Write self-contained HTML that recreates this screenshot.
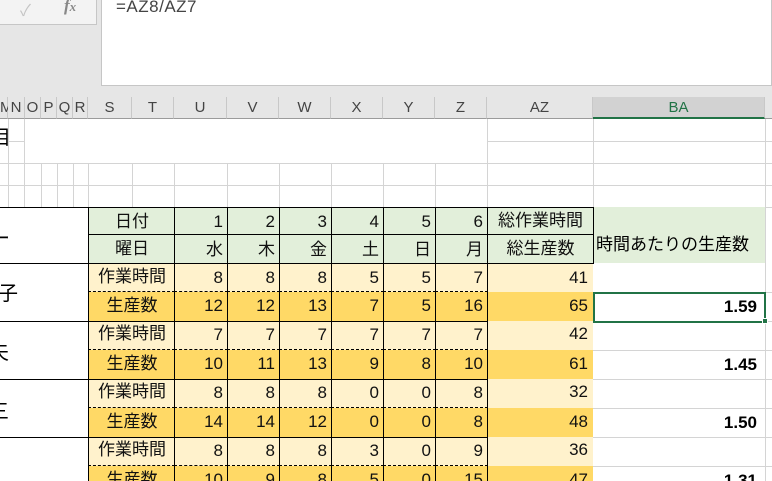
<!DOCTYPE html>
<html><head><meta charset="utf-8"><style>
html,body{margin:0;width:772px;height:481px;overflow:hidden;}
body{background:#fff;position:relative;font-family:"Liberation Sans","Noto Sans CJK JP",sans-serif;}
div{position:absolute;box-sizing:border-box;}
.h{top:97px;height:22px;background:#e6e6e6;border-right:1px solid #c8c8c8;border-bottom:1px solid #9b9b9b;color:#444;font-size:15px;text-align:center;line-height:22px;}
.c{font-size:17px;text-align:right;padding-right:5px;color:#111;border-left:1px solid #000;}
.g{background:#e2efda;}
.y{background:#fff2cc;}
.o{background:#ffd966;}
.l{text-align:center;padding:0;}
.vl{width:1px;background:#d4d4d4;}
.hl{height:1px;background:#d4d4d4;}
</style></head><body>
<div style="left:0;top:0;width:772px;height:97px;background:#e6e6e6;"></div>
<div style="left:0;top:0;width:97px;height:25px;background:#f3f3f3;border-right:1px solid #c6c6c6;border-bottom:1px solid #c6c6c6;"></div>
<div style="left:20px;top:-3px;font-size:16px;color:#c4c4c4;">✓</div>
<div style="left:64px;top:-4px;font-size:17px;color:#888;font-style:italic;font-family:'Liberation Serif',serif;font-weight:bold;">f<span style="font-size:13px">x</span></div>
<div style="left:101px;top:-1px;width:671px;height:87px;background:#fff;border:1px solid #c6c6c6;"></div>
<div style="left:116px;top:-3px;font-size:17px;color:#444;letter-spacing:0.5px;">=AZ8/AZ7</div>
<div class="h" style="left:0;width:8px;">M</div>
<div class="h" style="left:8px;width:17px;">N</div>
<div class="h" style="left:25px;width:16px;">O</div>
<div class="h" style="left:41px;width:16px;">P</div>
<div class="h" style="left:57px;width:16px;">Q</div>
<div class="h" style="left:73px;width:15px;">R</div>
<div class="h" style="left:88px;width:44px;">S</div>
<div class="h" style="left:132px;width:42px;">T</div>
<div class="h" style="left:174px;width:53px;">U</div>
<div class="h" style="left:227px;width:52px;">V</div>
<div class="h" style="left:279px;width:52px;">W</div>
<div class="h" style="left:331px;width:52px;">X</div>
<div class="h" style="left:383px;width:52px;">Y</div>
<div class="h" style="left:435px;width:52px;">Z</div>
<div class="h" style="left:487px;width:106px;">AZ</div>
<div class="h" style="left:593px;width:172px;background:#d2d2d2;color:#217346;border-bottom:2px solid #217346;">BA</div>
<div class="h" style="left:765px;width:10px;"></div>
<div class="vl" style="left:8px;top:119px;height:88px;"></div>
<div class="vl" style="left:24px;top:119px;height:88px;"></div>
<div class="vl" style="left:41px;top:163px;height:44px;"></div>
<div class="vl" style="left:57px;top:163px;height:44px;"></div>
<div class="vl" style="left:73px;top:163px;height:44px;"></div>
<div class="vl" style="left:88px;top:163px;height:44px;"></div>
<div class="vl" style="left:132px;top:163px;height:44px;"></div>
<div class="vl" style="left:174px;top:163px;height:44px;"></div>
<div class="vl" style="left:227px;top:163px;height:44px;"></div>
<div class="vl" style="left:279px;top:163px;height:44px;"></div>
<div class="vl" style="left:331px;top:163px;height:44px;"></div>
<div class="vl" style="left:383px;top:163px;height:44px;"></div>
<div class="vl" style="left:435px;top:163px;height:44px;"></div>
<div class="vl" style="left:487px;top:119px;height:88px;"></div>
<div class="vl" style="left:593px;top:119px;height:88px;"></div>
<div class="vl" style="left:765px;top:119px;height:362px;"></div>
<div class="hl" style="left:8px;top:141px;width:16px;"></div>
<div class="hl" style="left:487px;top:141px;width:290px;"></div>
<div class="hl" style="left:0;top:163px;width:772px;"></div>
<div class="hl" style="left:0;top:185px;width:772px;"></div>
<div class="hl" style="left:593px;top:207px;width:180px;"></div>
<div style="left:-9px;top:121px;font-size:20px;">目</div>
<div style="left:0;top:207px;width:88px;height:1px;background:#000;"></div>
<div style="left:0;top:263px;width:88px;height:1px;background:#000;"></div>
<div style="left:0;top:321px;width:88px;height:1px;background:#000;"></div>
<div style="left:0;top:379px;width:88px;height:1px;background:#000;"></div>
<div style="left:0;top:437px;width:88px;height:1px;background:#000;"></div>
<div style="left:-10px;top:222px;font-size:20px;">ー</div>
<div style="left:-2px;top:277px;font-size:20px;">子</div>
<div style="left:-11px;top:336px;font-size:20px;">夫</div>
<div style="left:-11px;top:395px;font-size:20px;">三</div>
<div class="g" style="left:593px;top:207px;width:172px;height:56px;font-size:17px;line-height:76px;padding-left:3px;">時間あたりの生産数</div>
<div style="left:593px;top:263px;width:180px;height:218px;background:#fff;"></div>
<div class="hl" style="left:593px;top:292px;width:180px;"></div>
<div class="hl" style="left:593px;top:321px;width:180px;"></div>
<div class="hl" style="left:593px;top:350px;width:180px;"></div>
<div class="hl" style="left:593px;top:379px;width:180px;"></div>
<div class="hl" style="left:593px;top:408px;width:180px;"></div>
<div class="hl" style="left:593px;top:437px;width:180px;"></div>
<div class="hl" style="left:593px;top:466px;width:180px;"></div>
<div class="vl" style="left:765px;top:263px;height:218px;"></div>
<div style="left:593px;top:292px;width:173px;height:31px;border:2px solid #217346;"></div>
<div style="left:762px;top:318px;width:6px;height:6px;background:#217346;border:1px solid #fff;"></div>
<div style="left:593px;top:292px;width:170px;height:30px;text-align:right;font-weight:bold;font-size:17px;line-height:30px;padding-right:6px;">1.59</div>
<div style="left:593px;top:350px;width:170px;height:30px;text-align:right;font-weight:bold;font-size:17px;line-height:30px;padding-right:6px;">1.45</div>
<div style="left:593px;top:408px;width:170px;height:30px;text-align:right;font-weight:bold;font-size:17px;line-height:30px;padding-right:6px;">1.50</div>
<div style="left:593px;top:466px;width:170px;height:15px;text-align:right;font-weight:bold;font-size:17px;line-height:30px;padding-right:6px;overflow:hidden;">1.31</div>

<div class="c g l" style="left:88px;top:207px;width:87px;height:28px;line-height:28px;border-top:1px solid #000;border-bottom:1px solid #000;">日付</div>
<div class="c g" style="left:174px;top:207px;width:54px;height:28px;line-height:28px;border-top:1px solid #000;border-bottom:1px solid #000;">1</div>
<div class="c g" style="left:227px;top:207px;width:53px;height:28px;line-height:28px;border-top:1px solid #000;border-bottom:1px solid #000;">2</div>
<div class="c g" style="left:279px;top:207px;width:53px;height:28px;line-height:28px;border-top:1px solid #000;border-bottom:1px solid #000;">3</div>
<div class="c g" style="left:331px;top:207px;width:53px;height:28px;line-height:28px;border-top:1px solid #000;border-bottom:1px solid #000;">4</div>
<div class="c g" style="left:383px;top:207px;width:53px;height:28px;line-height:28px;border-top:1px solid #000;border-bottom:1px solid #000;">5</div>
<div class="c g" style="left:435px;top:207px;width:53px;height:28px;line-height:28px;border-top:1px solid #000;border-bottom:1px solid #000;">6</div>
<div class="c g l" style="left:487px;top:207px;width:107px;height:28px;line-height:26px;border-top:1px solid #000;border-bottom:1px solid #000;border-right:1px solid #000;">総作業時間</div>

<div class="c g l" style="left:88px;top:235px;width:87px;height:29px;line-height:27px;border-bottom:1px solid #000;">曜日</div>
<div class="c g" style="left:174px;top:235px;width:54px;height:29px;line-height:29px;border-bottom:1px solid #000;">水</div>
<div class="c g" style="left:227px;top:235px;width:53px;height:29px;line-height:29px;border-bottom:1px solid #000;">木</div>
<div class="c g" style="left:279px;top:235px;width:53px;height:29px;line-height:29px;border-bottom:1px solid #000;">金</div>
<div class="c g" style="left:331px;top:235px;width:53px;height:29px;line-height:29px;border-bottom:1px solid #000;">土</div>
<div class="c g" style="left:383px;top:235px;width:53px;height:29px;line-height:29px;border-bottom:1px solid #000;">日</div>
<div class="c g" style="left:435px;top:235px;width:53px;height:29px;line-height:29px;border-bottom:1px solid #000;">月</div>
<div class="c g l" style="left:487px;top:235px;width:107px;height:29px;line-height:27px;border-bottom:1px solid #000;border-right:1px solid #000;">総生産数</div>

<div class="c y l" style="left:88px;top:264px;width:87px;height:28px;line-height:26px;border-bottom:1px dashed #000;">作業時間</div>
<div class="c y" style="left:174px;top:264px;width:54px;height:28px;line-height:28px;border-bottom:1px dashed #000;">8</div>
<div class="c y" style="left:227px;top:264px;width:53px;height:28px;line-height:28px;border-bottom:1px dashed #000;">8</div>
<div class="c y" style="left:279px;top:264px;width:53px;height:28px;line-height:28px;border-bottom:1px dashed #000;">8</div>
<div class="c y" style="left:331px;top:264px;width:53px;height:28px;line-height:28px;border-bottom:1px dashed #000;">5</div>
<div class="c y" style="left:383px;top:264px;width:53px;height:28px;line-height:28px;border-bottom:1px dashed #000;">5</div>
<div class="c y" style="left:435px;top:264px;width:53px;height:28px;line-height:28px;border-bottom:1px dashed #000;">7</div>
<div class="c y" style="left:487px;top:264px;width:106px;height:28px;line-height:28px;">41</div>
<div class="c o l" style="left:88px;top:292px;width:87px;height:30px;line-height:27px;border-bottom:1px solid #000;">生産数</div>
<div class="c o" style="left:174px;top:292px;width:54px;height:30px;line-height:28px;border-bottom:1px solid #000;">12</div>
<div class="c o" style="left:227px;top:292px;width:53px;height:30px;line-height:28px;border-bottom:1px solid #000;">12</div>
<div class="c o" style="left:279px;top:292px;width:53px;height:30px;line-height:28px;border-bottom:1px solid #000;">13</div>
<div class="c o" style="left:331px;top:292px;width:53px;height:30px;line-height:28px;border-bottom:1px solid #000;">7</div>
<div class="c o" style="left:383px;top:292px;width:53px;height:30px;line-height:28px;border-bottom:1px solid #000;">5</div>
<div class="c o" style="left:435px;top:292px;width:53px;height:30px;line-height:28px;border-bottom:1px solid #000;">16</div>
<div class="c o" style="left:487px;top:292px;width:106px;height:29px;line-height:28px;">65</div>

<div class="c y l" style="left:88px;top:322px;width:87px;height:28px;line-height:24px;border-bottom:1px dashed #000;">作業時間</div>
<div class="c y" style="left:174px;top:322px;width:54px;height:28px;line-height:26px;border-bottom:1px dashed #000;">7</div>
<div class="c y" style="left:227px;top:322px;width:53px;height:28px;line-height:26px;border-bottom:1px dashed #000;">7</div>
<div class="c y" style="left:279px;top:322px;width:53px;height:28px;line-height:26px;border-bottom:1px dashed #000;">7</div>
<div class="c y" style="left:331px;top:322px;width:53px;height:28px;line-height:26px;border-bottom:1px dashed #000;">7</div>
<div class="c y" style="left:383px;top:322px;width:53px;height:28px;line-height:26px;border-bottom:1px dashed #000;">7</div>
<div class="c y" style="left:435px;top:322px;width:53px;height:28px;line-height:26px;border-bottom:1px dashed #000;">7</div>
<div class="c y" style="left:487px;top:321px;width:106px;height:29px;line-height:26px;">42</div>
<div class="c o l" style="left:88px;top:350px;width:87px;height:30px;line-height:27px;border-bottom:1px solid #000;">生産数</div>
<div class="c o" style="left:174px;top:350px;width:54px;height:30px;line-height:28px;border-bottom:1px solid #000;">10</div>
<div class="c o" style="left:227px;top:350px;width:53px;height:30px;line-height:28px;border-bottom:1px solid #000;">11</div>
<div class="c o" style="left:279px;top:350px;width:53px;height:30px;line-height:28px;border-bottom:1px solid #000;">13</div>
<div class="c o" style="left:331px;top:350px;width:53px;height:30px;line-height:28px;border-bottom:1px solid #000;">9</div>
<div class="c o" style="left:383px;top:350px;width:53px;height:30px;line-height:28px;border-bottom:1px solid #000;">8</div>
<div class="c o" style="left:435px;top:350px;width:53px;height:30px;line-height:28px;border-bottom:1px solid #000;">10</div>
<div class="c o" style="left:487px;top:350px;width:106px;height:29px;line-height:28px;">61</div>

<div class="c y l" style="left:88px;top:380px;width:87px;height:28px;line-height:24px;border-bottom:1px dashed #000;">作業時間</div>
<div class="c y" style="left:174px;top:380px;width:54px;height:28px;line-height:26px;border-bottom:1px dashed #000;">8</div>
<div class="c y" style="left:227px;top:380px;width:53px;height:28px;line-height:26px;border-bottom:1px dashed #000;">8</div>
<div class="c y" style="left:279px;top:380px;width:53px;height:28px;line-height:26px;border-bottom:1px dashed #000;">8</div>
<div class="c y" style="left:331px;top:380px;width:53px;height:28px;line-height:26px;border-bottom:1px dashed #000;">0</div>
<div class="c y" style="left:383px;top:380px;width:53px;height:28px;line-height:26px;border-bottom:1px dashed #000;">0</div>
<div class="c y" style="left:435px;top:380px;width:53px;height:28px;line-height:26px;border-bottom:1px dashed #000;">8</div>
<div class="c y" style="left:487px;top:379px;width:106px;height:29px;line-height:26px;">32</div>
<div class="c o l" style="left:88px;top:408px;width:87px;height:30px;line-height:27px;border-bottom:1px solid #000;">生産数</div>
<div class="c o" style="left:174px;top:408px;width:54px;height:30px;line-height:28px;border-bottom:1px solid #000;">14</div>
<div class="c o" style="left:227px;top:408px;width:53px;height:30px;line-height:28px;border-bottom:1px solid #000;">14</div>
<div class="c o" style="left:279px;top:408px;width:53px;height:30px;line-height:28px;border-bottom:1px solid #000;">12</div>
<div class="c o" style="left:331px;top:408px;width:53px;height:30px;line-height:28px;border-bottom:1px solid #000;">0</div>
<div class="c o" style="left:383px;top:408px;width:53px;height:30px;line-height:28px;border-bottom:1px solid #000;">0</div>
<div class="c o" style="left:435px;top:408px;width:53px;height:30px;line-height:28px;border-bottom:1px solid #000;">8</div>
<div class="c o" style="left:487px;top:408px;width:106px;height:29px;line-height:28px;">48</div>

<div class="c y l" style="left:88px;top:438px;width:87px;height:28px;line-height:24px;border-bottom:1px dashed #000;">作業時間</div>
<div class="c y" style="left:174px;top:438px;width:54px;height:28px;line-height:26px;border-bottom:1px dashed #000;">8</div>
<div class="c y" style="left:227px;top:438px;width:53px;height:28px;line-height:26px;border-bottom:1px dashed #000;">8</div>
<div class="c y" style="left:279px;top:438px;width:53px;height:28px;line-height:26px;border-bottom:1px dashed #000;">8</div>
<div class="c y" style="left:331px;top:438px;width:53px;height:28px;line-height:26px;border-bottom:1px dashed #000;">3</div>
<div class="c y" style="left:383px;top:438px;width:53px;height:28px;line-height:26px;border-bottom:1px dashed #000;">0</div>
<div class="c y" style="left:435px;top:438px;width:53px;height:28px;line-height:26px;border-bottom:1px dashed #000;">9</div>
<div class="c y" style="left:487px;top:437px;width:106px;height:29px;line-height:26px;">36</div>
<div class="c o l" style="left:88px;top:466px;width:87px;height:15px;line-height:27px;overflow:hidden;">生産数</div>
<div class="c o" style="left:174px;top:466px;width:54px;height:15px;line-height:28px;overflow:hidden;">10</div>
<div class="c o" style="left:227px;top:466px;width:53px;height:15px;line-height:28px;overflow:hidden;">9</div>
<div class="c o" style="left:279px;top:466px;width:53px;height:15px;line-height:28px;overflow:hidden;">8</div>
<div class="c o" style="left:331px;top:466px;width:53px;height:15px;line-height:28px;overflow:hidden;">5</div>
<div class="c o" style="left:383px;top:466px;width:53px;height:15px;line-height:28px;overflow:hidden;">0</div>
<div class="c o" style="left:435px;top:466px;width:53px;height:15px;line-height:28px;overflow:hidden;">15</div>
<div class="c o" style="left:487px;top:466px;width:106px;height:15px;line-height:28px;overflow:hidden;">47</div>
</body></html>
